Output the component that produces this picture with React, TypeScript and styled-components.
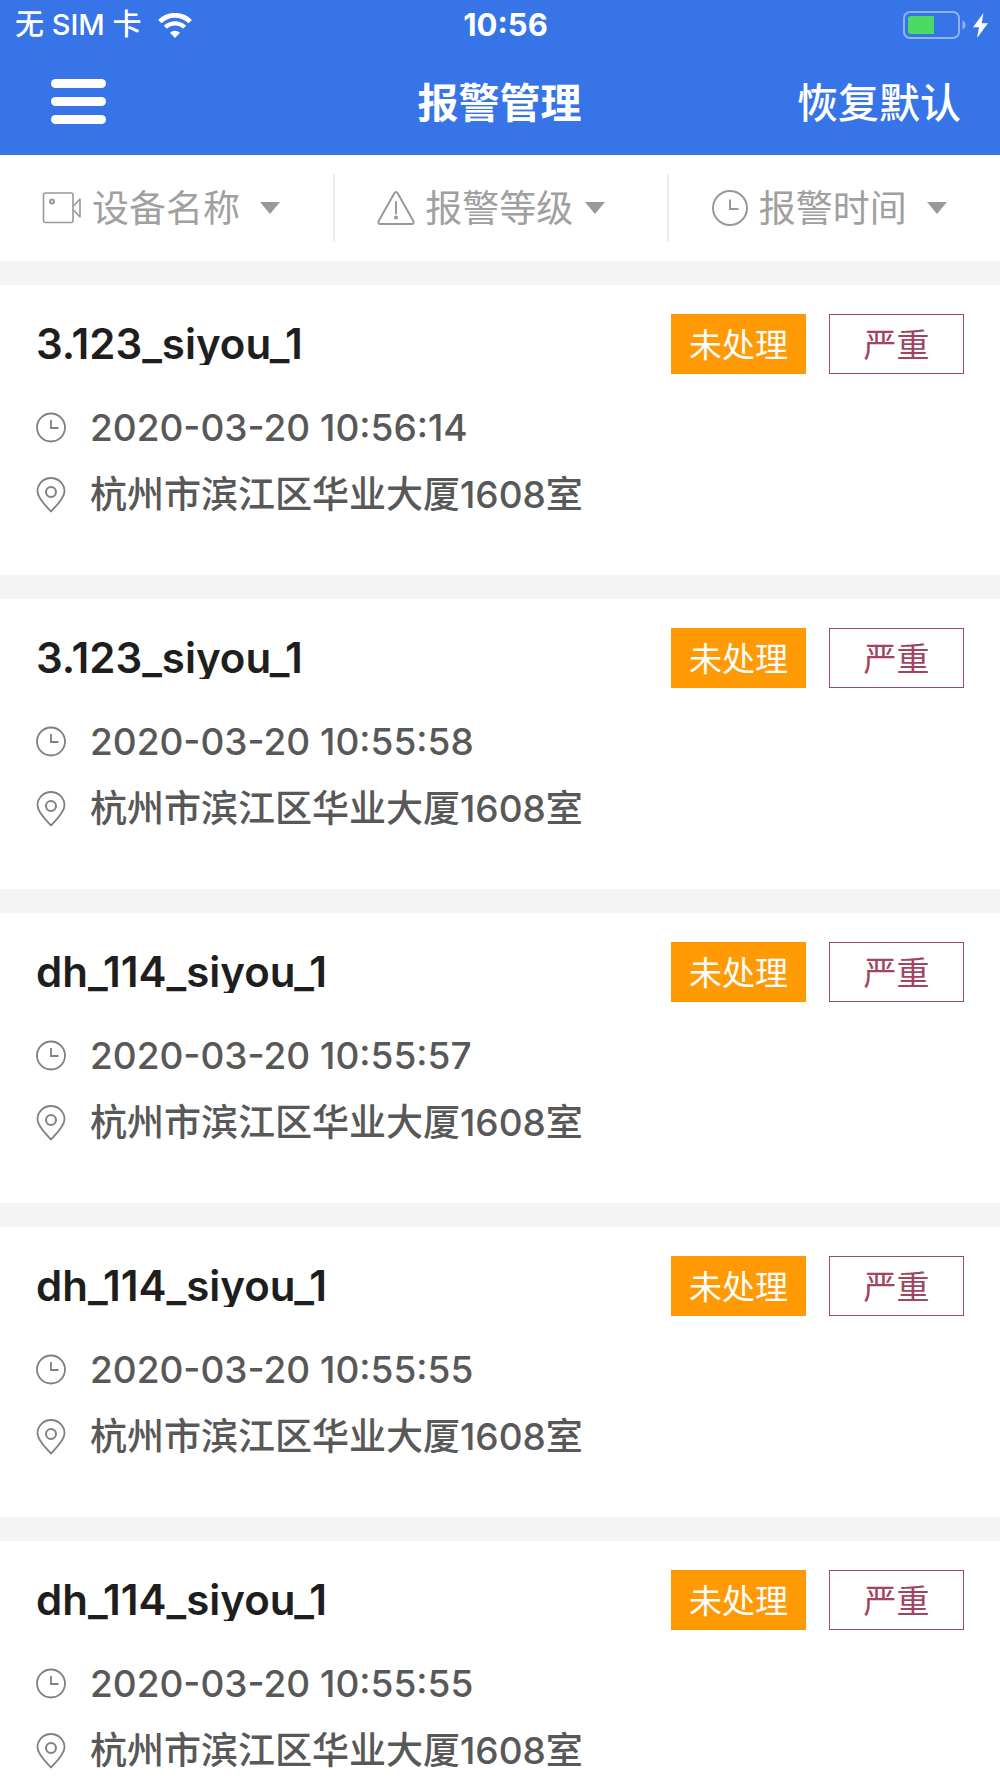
import React from "react";
import styled, { createGlobalStyle } from "styled-components";

const GlobalStyle = createGlobalStyle`
  *, *::before, *::after { box-sizing: border-box; }
  body {
    margin: 0;
    background: #fff;
    font-family: Inter, "Noto Sans CJK SC", sans-serif;
  }
  button, select {
    font: inherit;
    color: inherit;
    background: none;
    border: 0;
    padding: 0;
    margin: 0;
    cursor: pointer;
  }
  h1, h2, p, ul { margin: 0; padding: 0; }
  svg { display: block; flex: none; }
`;

const Screen = styled.div`
  display: flex;
  flex-direction: column;
  height: 100vh;
  overflow: hidden;
  background: #f4f4f4;
`;

const Header = styled.header`
  flex: none;
  background: #3674e7;
  color: #fff;
`;

const StatusBar = styled.div`
  display: grid;
  grid-template-columns: 1fr auto 1fr;
  align-items: center;
  height: 50px;
  padding: 0 12px 0 15px;
  font-size: 29px;
  line-height: 40px;
`;

const Carrier = styled.div`
  display: flex;
  align-items: center;
  gap: 16px;
  font-weight: 500;
`;

const Clock = styled.time`
  padding-left: 8px;
  font-size: 31px;
  font-weight: 700;
`;

const Power = styled.div`
  display: flex;
  align-items: center;
  justify-content: flex-end;
  gap: 7px;
`;

const NavBar = styled.div`
  display: grid;
  grid-template-columns: 1fr auto 1fr;
  align-items: center;
  height: 105px;
  padding: 0 39px 0 38px;
  font-size: 41px;
  line-height: 60px;
`;

const Title = styled.h1`
  font-size: inherit;
  font-weight: 700;
`;

const MenuButton = styled.button`
  justify-self: start;
  display: flex;
  flex-direction: column;
  gap: 9px;
  padding: 12px 13px 14px;
`;

const MenuBar = styled.span`
  width: 55px;
  height: 9px;
  border-radius: 5px;
  background: #fff;
`;

const ResetButton = styled.button`
  justify-self: end;
  font-weight: 500;
`;

const Filters = styled.div`
  flex: none;
  display: grid;
  grid-template-columns: repeat(3, 1fr);
  padding: 19px 0 20px;
  background: #fff;
`;

const Filter = styled.label<{ $gap: number }>`
  display: flex;
  align-items: center;
  height: 67px;
  padding-left: 40px;
  border-left: 2px solid #ececec;
  &:first-child { border-left-color: transparent; }
  & > svg:last-child { margin-left: ${(p) => p.$gap}px; }
`;

const FilterSelect = styled.select`
  appearance: none;
  margin-left: 10px;
  padding-top: 2px;
  font-size: 37px;
  line-height: 54px;
  color: #a0a0a0;
`;

const List = styled.ul`
  flex: 1;
  min-height: 0;
  overflow-y: auto;
  scrollbar-width: none;
  display: flex;
  flex-direction: column;
  gap: 24px;
  padding-top: 24px;
  list-style: none;
`;

const Card = styled.li`
  flex: none;
  padding: 29px 36px 60px;
  background: #fff;
`;

const CardHead = styled.div`
  display: flex;
  align-items: center;
  gap: 23px;
  margin-bottom: 34px;
`;

const Name = styled.h2`
  flex: 1;
  min-width: 0;
  overflow: hidden;
  white-space: nowrap;
  text-overflow: ellipsis;
  font-size: 42px;
  font-weight: 600;
  line-height: 42px;
  color: #1e1e1e;
`;

const Badge = styled.span<{ $outlined?: boolean }>`
  width: 135px;
  height: 60px;
  border: 1px solid ${(p) => (p.$outlined ? "#a14a65" : "#ff9a05")};
  background: ${(p) => (p.$outlined ? "#fff" : "#ff9a05")};
  color: ${(p) => (p.$outlined ? "#a04560" : "#fff")};
  font-size: 33px;
  font-weight: 400;
  line-height: 60px;
  text-align: center;
`;

const Detail = styled.p`
  display: flex;
  align-items: center;
  gap: 24px;
  height: 40px;
  font-size: 37px;
  font-weight: 500;
  line-height: 40px;
  color: #585858;
  & + & { margin-top: 27px; }
`;

const WifiIcon = () => (
  <svg width="34" height="25" viewBox="0 0 34 25" aria-hidden="true">
    <g fill="none" stroke="#fff">
      <path d="M1.8 8.6a21.5 21.5 0 0 1 30.4 0" strokeWidth="4.8" />
      <path d="M7.4 14.3a13.6 13.6 0 0 1 19.2 0" strokeWidth="4.4" />
    </g>
    <path d="M17 25l-5-5.2a7.2 7.2 0 0 1 10 0z" fill="#fff" />
  </svg>
);

const BatteryIcon = () => (
  <svg width="63" height="28" viewBox="0 0 63 28" aria-hidden="true">
    <rect x="1" y="1" width="55" height="26" rx="6" fill="none" stroke="#8fb2f4" strokeWidth="2" />
    <path d="M59.500 9.500c4 1.500 4 7.500 0 9z" fill="#8fb2f4" />
    <path d="M8 5h23v18H8a3 3 0 0 1-3-3V8a3 3 0 0 1 3-3z" fill="#4cd964" />
  </svg>
);

const BoltIcon = () => (
  <svg width="15" height="25" viewBox="0 0 15 25" aria-hidden="true">
    <path d="M10.500 0L0 14.200h6L4 25 15 10.200H8.700z" fill="#fff" />
  </svg>
);

const CameraIcon = () => (
  <svg width="40" height="36" viewBox="0 0 40 36" fill="none" stroke="#999" strokeWidth="1.600" strokeLinejoin="round" aria-hidden="true">
    <rect x="1.500" y="3" width="29.500" height="29.500" rx="2" />
    <circle cx="10" cy="11.500" r="2" strokeWidth="2" />
    <path d="M31 16.500l7-7.500v18l-7-7.500" />
  </svg>
);

const WarningIcon = () => (
  <svg width="40" height="36" viewBox="0 0 40 36" fill="none" stroke="#999" strokeWidth="2" strokeLinecap="round" strokeLinejoin="round" aria-hidden="true">
    <path d="M19.300 3.200Q21 .6 22.700 3.200L38.300 31Q39.400 34 36.500 34H5.500Q2.600 34 3.700 31z" />
    <path d="M21 12v11.500" />
    <circle cx="21" cy="27.500" r="1.900" fill="#999" stroke="none" />
  </svg>
);

const TimeFilterIcon = () => (
  <svg width="40" height="36" viewBox="0 0 40 36" fill="none" stroke="#999" strokeWidth="2" aria-hidden="true">
    <circle cx="21" cy="18" r="17" />
    <path d="M21 9.500v9.500h8.500" />
  </svg>
);

const CaretIcon = () => (
  <svg width="20" height="12" viewBox="0 0 20 12" aria-hidden="true">
    <path d="M0 0h20L10 12z" fill="#999" />
  </svg>
);

const ClockIcon = () => (
  <svg width="30" height="32" viewBox="0 0 30 32" fill="none" stroke="#808080" strokeWidth="1.800" aria-hidden="true">
    <circle cx="15" cy="15.500" r="14" />
    <path d="M15 8v8h7.500" />
  </svg>
);

const PinIcon = () => (
  <svg width="30" height="36" viewBox="0 0 30 36" fill="none" stroke="#808080" strokeWidth="1.800" strokeLinejoin="round" aria-hidden="true">
    <path d="M15 34.500C10 29 1.500 21.500 1.500 14.300a13.500 13.300 0 0 1 27 0C28.500 21.500 20 29 15 34.500z" />
    <circle cx="15" cy="15" r="5" strokeWidth="2" />
  </svg>
);

const filters = [
  { label: "设备名称", Icon: CameraIcon, gap: 20 },
  { label: "报警等级", Icon: WarningIcon, gap: 12 },
  { label: "报警时间", Icon: TimeFilterIcon, gap: 20 },
];

const address = "杭州市滨江区华业大厦1608室";

const alarms = [
  { name: "3.123_siyou_1", time: "2020-03-20 10:56:14" },
  { name: "3.123_siyou_1", time: "2020-03-20 10:55:58" },
  { name: "dh_114_siyou_1", time: "2020-03-20 10:55:57" },
  { name: "dh_114_siyou_1", time: "2020-03-20 10:55:55" },
  { name: "dh_114_siyou_1", time: "2020-03-20 10:55:55" },
];

export default function App() {
  return (
    <Screen>
      <GlobalStyle />
      <Header>
        <StatusBar>
          <Carrier>
            无 SIM 卡
            <WifiIcon />
          </Carrier>
          <Clock>10:56</Clock>
          <Power>
            <BatteryIcon />
            <BoltIcon />
          </Power>
        </StatusBar>
        <NavBar>
          <MenuButton type="button" aria-label="菜单">
            <MenuBar />
            <MenuBar />
            <MenuBar />
          </MenuButton>
          <Title>报警管理</Title>
          <ResetButton type="button">恢复默认</ResetButton>
        </NavBar>
      </Header>
      <Filters>
        {filters.map(({ label, Icon, gap }) => (
          <Filter key={label} $gap={gap}>
            <Icon />
            <FilterSelect aria-label={label}>
              <option>{label}</option>
            </FilterSelect>
            <CaretIcon />
          </Filter>
        ))}
      </Filters>
      <List>
        {alarms.map((alarm, i) => (
          <Card key={i}>
            <CardHead>
              <Name>{alarm.name}</Name>
              <Badge>未处理</Badge>
              <Badge $outlined>严重</Badge>
            </CardHead>
            <Detail>
              <ClockIcon />
              <time>{alarm.time}</time>
            </Detail>
            <Detail>
              <PinIcon />
              <span>{address}</span>
            </Detail>
          </Card>
        ))}
      </List>
    </Screen>
  );
}
